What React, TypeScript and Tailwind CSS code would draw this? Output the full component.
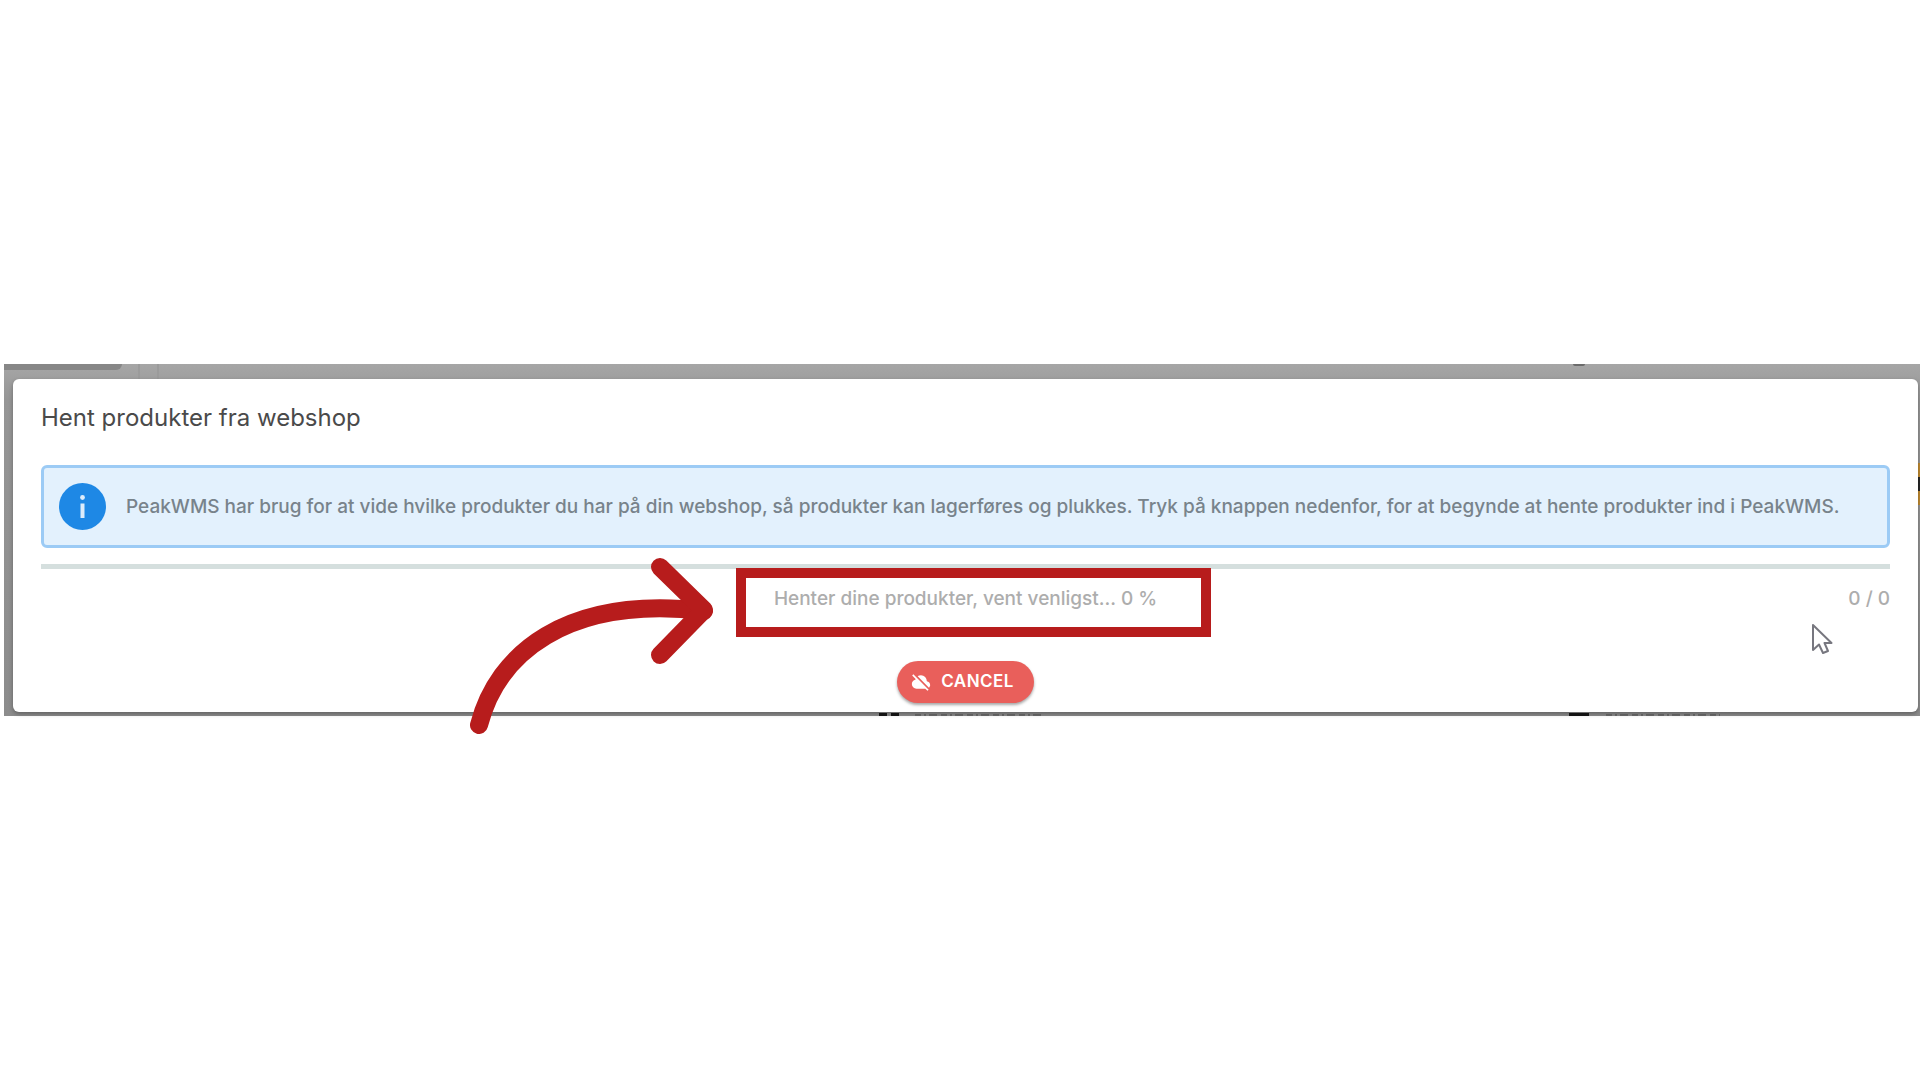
/** Slivers of the page that stay visible around the dialog. */
function PageAbove() {
  return (
    <div aria-hidden="true" className="flex h-[15px] items-start">
      <div className="h-1.5 w-[118px] rounded-br-lg bg-[#878787]" />
      <div className="ml-4 h-full w-[21px] border-x-2 border-[#9b9b9b]" />
      <div className="ml-auto mr-[335px] h-0.5 w-3 rounded-b-full bg-[#6b6b6b]" />
    </div>
  );
}

/** Tops of the icons and labels that the dialog's lower edge cuts off. */
function PageBelow() {
  return (
    <svg
      aria-hidden="true"
      className="block h-1 w-full"
      viewBox="0 0 1916 4"
      preserveAspectRatio="none"
    >
      <g fill="#161616">
        <rect x="875" y="1" width="8" height="3" />
        <rect x="887" y="1" width="8" height="3" />
        <rect x="1565" y="1" width="20" height="3" />
      </g>
      <g stroke="#4d4d4d" strokeWidth="1" strokeDasharray="6 3 2 3 8 4">
        <path d="M911 3H1039" />
        <path d="M1602 3H1716" />
      </g>
    </svg>
  );
}

function InfoBanner() {
  return (
    <div
      role="status"
      className="mt-[31px] flex items-center gap-5 rounded-md border-3 border-[#9ccbf5] bg-[#e3f1fd] py-[15px] pl-[15px] pr-2"
    >
      <svg className="size-[47px] shrink-0" viewBox="0 0 47 47" aria-hidden="true">
        <circle cx="23.5" cy="23.5" r="23.5" fill="#1e88e5" />
        <circle cx="23.5" cy="14.5" r="2.4" fill="#dcecfb" />
        <rect x="21.5" y="20.5" width="4" height="14.5" fill="#dcecfb" />
      </svg>
      <p className="text-[19px] font-medium leading-7 text-[#78838b]">
        PeakWMS har brug for at vide hvilke produkter du har på din webshop, så produkter kan
        lagerføres og plukkes. Tryk på knappen nedenfor, for at begynde at hente produkter ind i
        PeakWMS.
      </p>
    </div>
  );
}

function Arrow() {
  return (
    <svg
      aria-hidden="true"
      className="pointer-events-none absolute -top-5 right-full mr-8 h-[176px] w-[244px]"
      viewBox="470 558 244 176"
      fill="none"
      stroke="#b71c1c"
      strokeWidth="18"
      strokeLinecap="round"
      strokeLinejoin="round"
    >
      <path d="M479 725C497 655 565 595 704 611" />
      <path d="M660 567L704 610L660 655" />
    </svg>
  );
}

function Pointer() {
  return (
    <svg
      aria-hidden="true"
      className="pointer-events-none absolute right-[57px] top-[38px] h-8 w-[22px]"
      viewBox="0 0 22 32"
    >
      <path
        d="M2 2V27L8 21.5L12 30L17 28L13.5 20H20.5Z"
        fill="#fff"
        stroke="#77777f"
        strokeWidth="2"
        strokeLinejoin="round"
      />
    </svg>
  );
}

function CloudOffIcon() {
  return (
    <svg aria-hidden="true" className="size-5" viewBox="0 0 24 24" fill="currentColor">
      <path d="M19.8 22.6 17.15 20H6.5q-2.3 0-3.9-1.6T1 14.5q0-1.92 1.19-3.42 1.19-1.51 3.06-1.93.08-.2.15-.39.1-.19.15-.41L1.4 4.2l1.4-1.4 18.4 18.4ZM21.6 18.75 8.05 5.23q.84-.6 1.82-.92Q10.85 4 12 4q2.93 0 4.96 2.04Q19 8.07 19 11q1.73.2 2.86 1.5 1.14 1.28 1.14 3 0 .9-.37 1.74-.38.84-1.03 1.51Z" />
    </svg>
  );
}

export default function App() {
  return (
    <main className="flex min-h-screen items-center overflow-hidden bg-white pl-1 font-['Inter',sans-serif]">
      <div className="relative w-full bg-linear-to-b from-[#a6a6a6] from-0% via-[#969696] via-10% to-[#8c8c8c]">
        <PageAbove />
        <div
          aria-hidden="true"
          className="absolute right-0 top-[99px] h-[42px] w-1 border-y-14 border-[#c08a30] bg-[#262626]"
        />
        <section
          role="dialog"
          aria-labelledby="dialog-title"
          className="relative ml-[9px] mr-0.5 rounded-md bg-white px-7 pb-[9px] pt-[23px] shadow-[0_2px_4px_rgba(0,0,0,0.3)]"
        >
          <h1 id="dialog-title" className="text-2xl text-[#4a4a4a]">
            Hent produkter fra webshop
          </h1>
          <InfoBanner />

          <div
            role="progressbar"
            aria-label="Henter produkter"
            aria-valuenow={0}
            className="mt-4 h-[5px] bg-[#d5dfde]"
          />

          <div className="relative mt-4 grid grid-cols-[1fr_auto_1fr] text-[19px] font-medium leading-7 text-[#adadad]">
            <p className="relative col-start-2">
              Henter dine produkter, vent venligst... 0 %
              <span className="pointer-events-none absolute -bottom-6 -left-[38px] -right-[54px] -top-[17px] z-10 border-10 border-[#b71c1c]">
                <Arrow />
              </span>
            </p>
            <p className="text-right">0 / 0</p>
            <Pointer />
          </div>

          <div className="mt-12 flex justify-center">
            <button
              type="button"
              className="flex h-[42px] items-center gap-2.5 rounded-full bg-[#e95f5b] pl-3.5 pr-5 text-[17px] font-semibold tracking-wide text-white shadow-[0_2px_3px_rgba(0,0,0,0.35)]"
            >
              <CloudOffIcon />
              CANCEL
            </button>
          </div>
        </section>
        <PageBelow />
      </div>
    </main>
  );
}
